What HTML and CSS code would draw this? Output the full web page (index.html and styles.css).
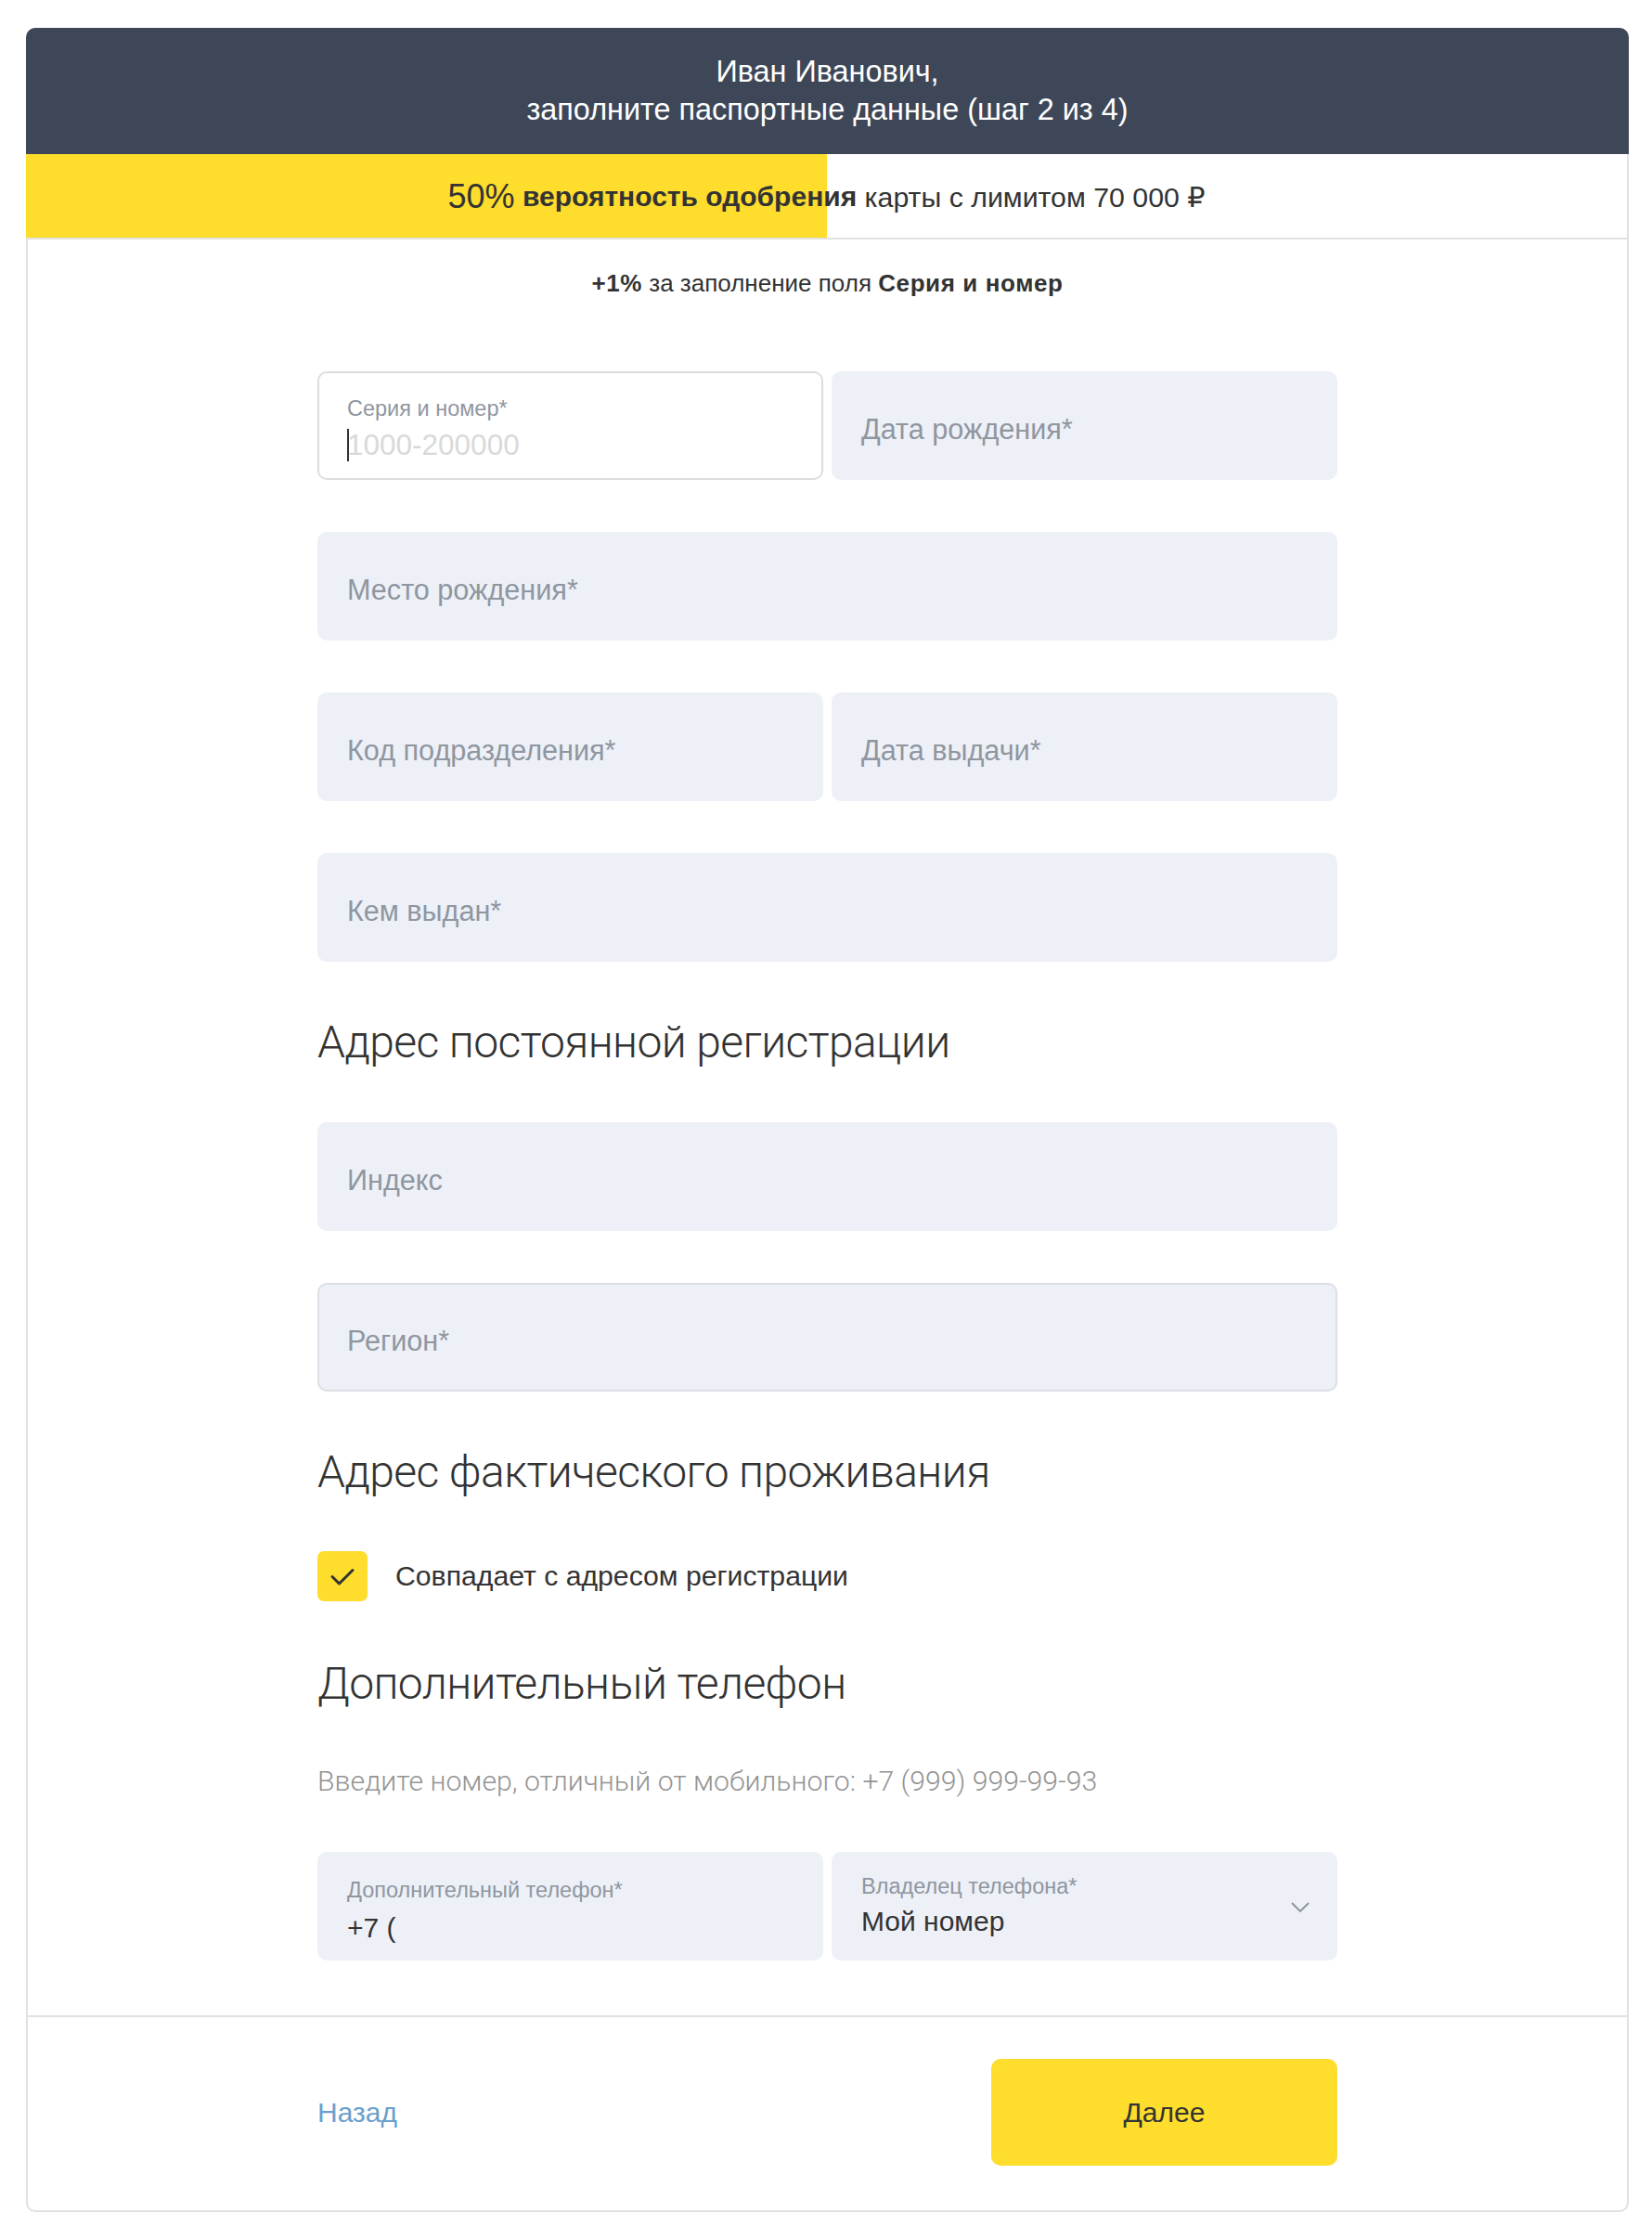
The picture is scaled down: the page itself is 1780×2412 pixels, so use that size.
FILE: index.html
```html
<!DOCTYPE html>
<html lang="ru">
<head>
<meta charset="utf-8">
<title>Паспортные данные</title>
<link rel="stylesheet" href="styles.css">
</head>
<body>
<div class="card">
  <header class="hero">
    <div>Иван Иванович,</div>
    <div>заполните паспортные данные (шаг 2 из 4)</div>
  </header>
  <div class="progress">
    <span class="pct">50%</span>&nbsp;<b>вероятность одобрения</b>&nbsp;карты с лимитом 70 000 ₽
  </div>
  <main class="form">
    <p class="bonus"><b>+1%</b> за заполнение поля <b>Серия и номер</b></p>

    <div class="row two">
      <div class="field field-focus">
        <span class="label">Серия и номер*</span>
        <span class="value"><span class="caret"></span><span class="ph">1000-200000</span></span>
      </div>
      <div class="field"><span class="placeholder">Дата рождения*</span></div>
    </div>

    <div class="row">
      <div class="field"><span class="placeholder">Место рождения*</span></div>
    </div>

    <div class="row two">
      <div class="field"><span class="placeholder">Код подразделения*</span></div>
      <div class="field"><span class="placeholder">Дата выдачи*</span></div>
    </div>

    <div class="row">
      <div class="field"><span class="placeholder">Кем выдан*</span></div>
    </div>

    <h2 class="section-title">Адрес постоянной регистрации</h2>

    <div class="row row-first">
      <div class="field"><span class="placeholder">Индекс</span></div>
    </div>
    <div class="row row-next">
      <div class="field field-outline"><span class="placeholder">Регион*</span></div>
    </div>

    <h2 class="section-title">Адрес фактического проживания</h2>

    <label class="check">
      <span class="box">
        <svg width="54" height="54" viewBox="0 0 54 54"><path d="M16 27.5 L23.5 35 L38 20.5" fill="none" stroke="#333" stroke-width="3" stroke-linecap="round" stroke-linejoin="round"/></svg>
      </span>
      <span class="check-text">Совпадает с адресом регистрации</span>
    </label>

    <h2 class="section-title title-phone">Дополнительный телефон</h2>
    <p class="hint">Введите номер, отличный от мобильного: +7 (999) 999-99-93</p>

    <div class="row two row-phone">
      <div class="field field-filled">
        <span class="label">Дополнительный телефон*</span>
        <span class="value">+7 (</span>
      </div>
      <div class="field field-filled field-select">
        <span class="label">Владелец телефона*</span>
        <span class="value">Мой номер</span>
        <svg class="chev" width="20" height="11" viewBox="0 0 20 11"><path d="M1 1 L10 10 L19 1" fill="none" stroke="#8a8f99" stroke-width="1.8"/></svg>
      </div>
    </div>
  </main>
  <footer class="actions">
    <a class="back" href="#">Назад</a>
    <button class="next" type="button">Далее</button>
  </footer>
</div>
</body>
</html>
```

FILE: styles.css
```css
* { box-sizing: border-box; }

body {
  margin: 0;
  background: #fff;
  font-family: "Liberation Sans", Arial, "DejaVu Sans", sans-serif;
  color: #333;
}

.card {
  width: 1727px;
  margin: 30px 0 29px 28px;
  border: 2px solid #e1e1e1;
  border-radius: 10px;
  background: #fff;
}

.hero {
  margin: -2px -2px 0;
  height: 136px;
  background: #3e4758;
  color: #fff;
  border-radius: 10px 10px 0 0;
  display: flex;
  flex-direction: column;
  justify-content: center;
  align-items: center;
  font-size: 32.4px;
  line-height: 41px;
}

.progress {
  margin-left: -2px;
  height: 92px;
  padding-top: 2px;
  border-bottom: 2px solid #e1e1e1;
  background: linear-gradient(to right, #ffdd2d 50%, #fff 50%);
  display: flex;
  align-items: center;
  justify-content: center;
  font-size: 30.3px;
  color: #333;
  white-space: nowrap;
}

.progress .pct { font-size: 36px; }
.progress b { font-weight: 700; font-size: 30px; }

.form {
  padding: 31px 312px 59px;
}

.bonus {
  margin: 0 0 79px;
  text-align: center;
  font-size: 26px;
  line-height: 32px;
}

.bonus b { letter-spacing: 0.6px; }

.row + .row { margin-top: 56px; }

.row.two {
  display: grid;
  grid-template-columns: 1fr 1fr;
  column-gap: 9px;
}

.field {
  position: relative;
  height: 117px;
  border-radius: 10px;
  background: #edf0f7;
  border: 2px solid transparent;
  padding: 0 30px;
  display: flex;
  flex-direction: column;
  justify-content: center;
}

.field-focus {
  background: #fff;
  border-color: #dddddd;
  padding-top: 7px;
}

.field-outline { border-color: #dcdfe5; }

.placeholder {
  margin-top: 7px;
  font-size: 30.6px;
  color: #8f96a0;
}

.label {
  font-size: 23.5px;
  line-height: 30px;
  color: #8f96a0;
}

.value {
  display: flex;
  align-items: center;
  font-size: 30px;
  line-height: 40px;
  color: #333;
  margin-top: 4px;
}

.caret {
  width: 2px;
  height: 35px;
  background: #333;
  margin-right: -2px;
}

.ph { color: #d9d9d9; font-size: 31.5px; }

.field-filled { padding-top: 10px; }
.field-filled .value { margin-top: 6px; }
.field-select { padding-top: 0; }
.field-select .value { margin-top: 3px; }

.chev {
  position: absolute;
  right: 28px;
  top: 52px;
}

.section-title {
  margin: 59px 0 0;
  font-family: Roboto, "Liberation Sans", sans-serif;
  font-weight: 300;
  font-size: 48px;
  line-height: 56px;
  letter-spacing: -0.6px;
  color: #333;
}

.section-title + .row { margin-top: 58px; }
.row-next { margin-top: 57px; }

.row + .section-title { margin-top: 59px; }

.check {
  margin-top: 57px;
  display: flex;
  align-items: center;
  gap: 30px;
}

.box {
  width: 54px;
  height: 54px;
  border-radius: 7px;
  background: #ffdd2d;
  display: block;
}

.box svg { display: block; }

.check-text {
  font-size: 30.2px;
  color: #333;
}

.title-phone { margin-top: 61px; }

.hint {
  margin: 59px 0 0;
  font-family: Roboto, "Liberation Sans", sans-serif;
  font-weight: 300;
  font-size: 30.2px;
  line-height: 36px;
  color: #949494;
}

.row-phone { margin-top: 58px; }

.actions {
  border-top: 2px solid #e1e1e1;
  padding: 45px 312px 48px;
  display: flex;
  align-items: center;
  justify-content: space-between;
}

.back {
  font-size: 30px;
  color: #6a9fcc;
  text-decoration: none;
}

.next {
  width: 373px;
  height: 115px;
  border: 0;
  border-radius: 10px;
  background: #ffdd2d;
  font-family: inherit;
  font-size: 30px;
  color: #333;
}
```
